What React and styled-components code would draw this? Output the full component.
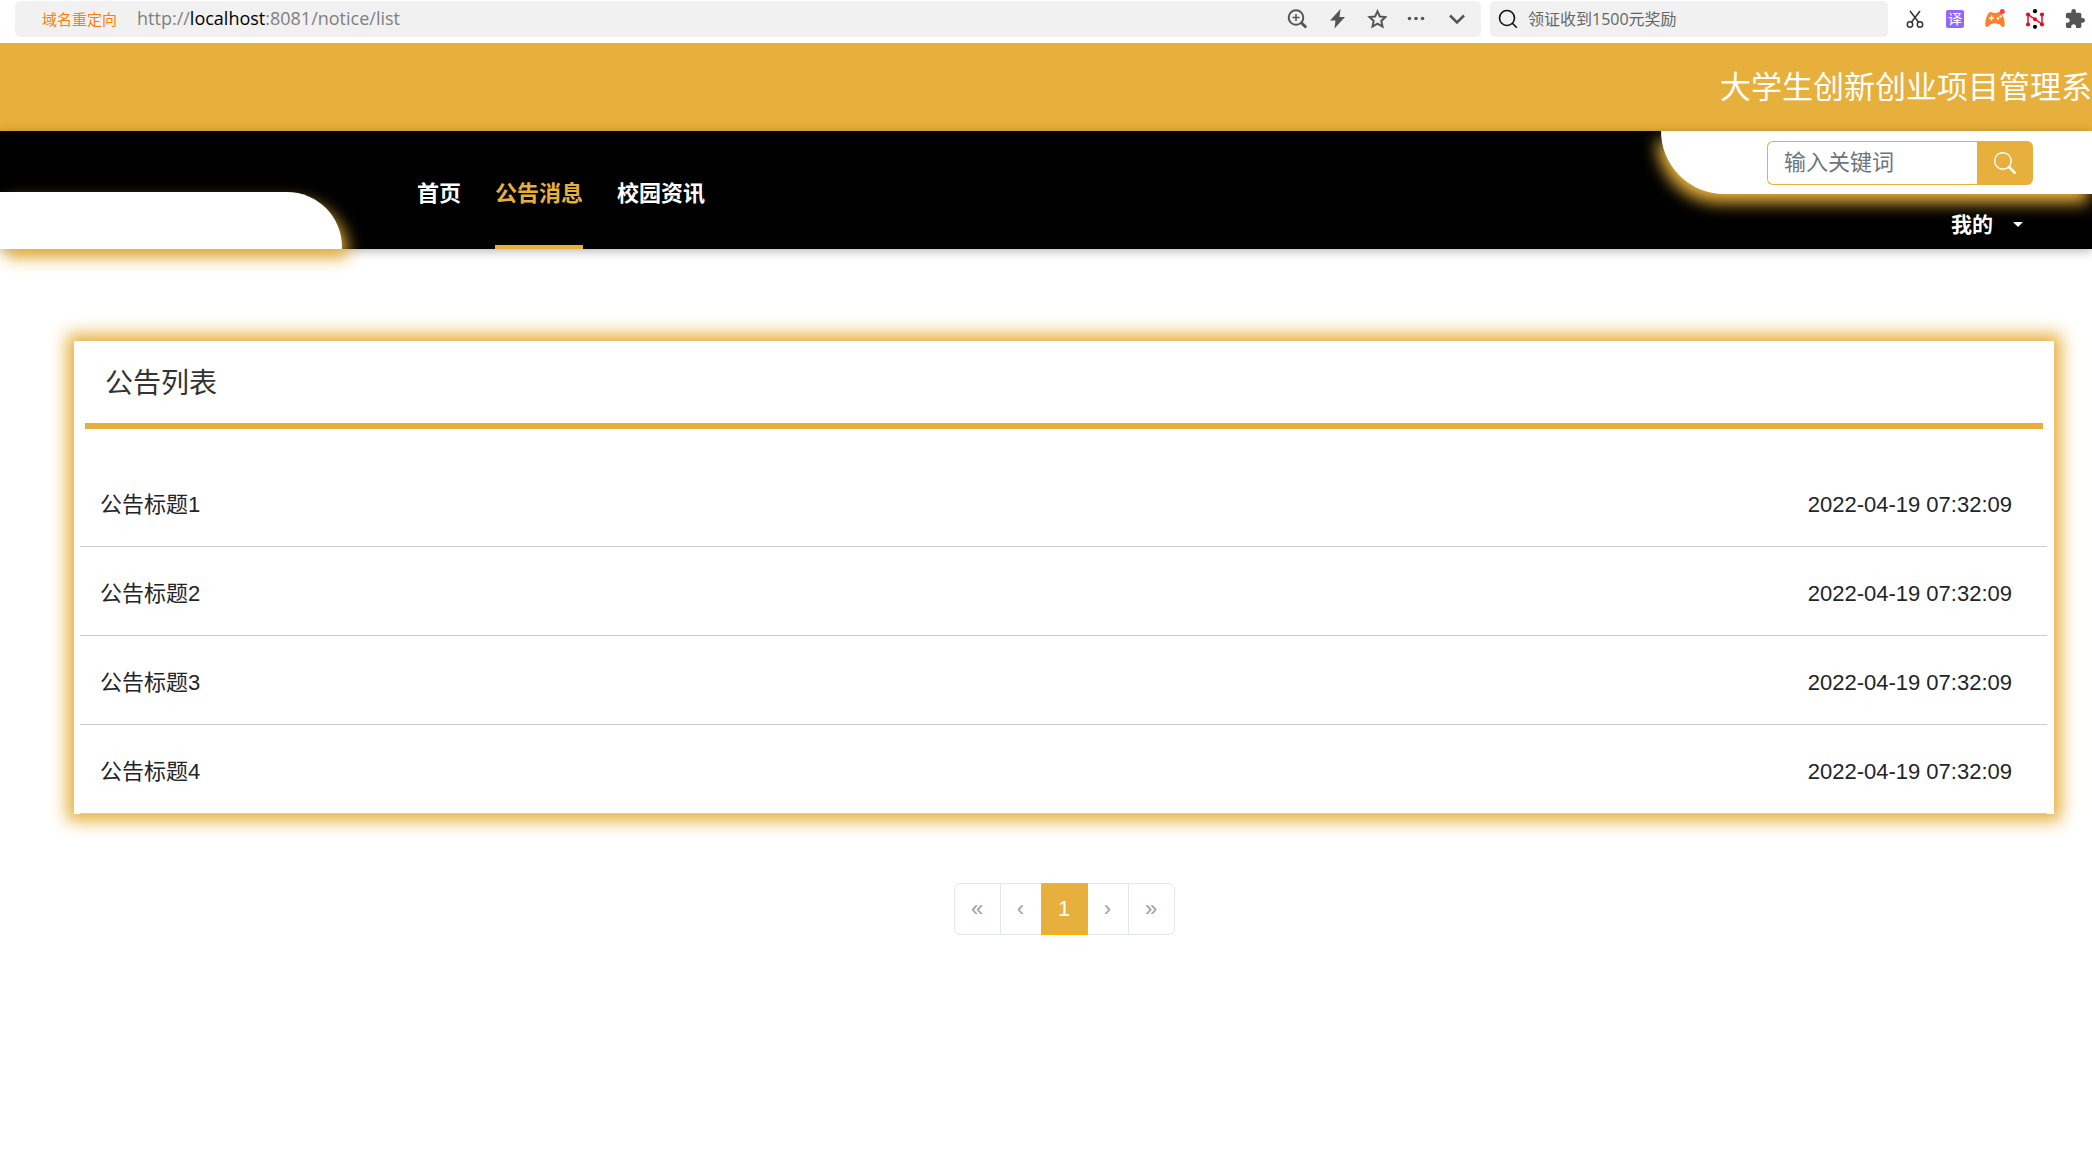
import React from "react";
import styled, { createGlobalStyle } from "styled-components";

const gold = "#e7b03c";

const GlobalStyle = createGlobalStyle`
  *, *::before, *::after { box-sizing: border-box; }
  body {
    margin: 0;
    background: #fff;
    color: #212529;
    font-family: "Liberation Sans", "Noto Sans CJK SC", sans-serif;
    font-size: 22px;
    line-height: 32px;
    overflow-x: hidden;
  }
  a { color: inherit; text-decoration: none; }
  ul { list-style: none; margin: 0; padding: 0; }
  button { font: inherit; border: 0; padding: 0; background: none; color: inherit; cursor: pointer; }
`;

/* Browser toolbar */
const Toolbar = styled.div`
  display: flex;
  align-items: flex-start;
  gap: 9px;
  height: 43px;
  padding: 1px 7px 0 15px;
  font-family: "Open Sans", "Noto Sans CJK SC", sans-serif;
`;

const Field = styled.div`
  display: flex;
  align-items: center;
  height: 36px;
  border-radius: 5px;
  background: #f1f1f1;
`;

const AddressField = styled(Field)`
  flex: 1;
  padding: 0 14px 0 27px;
`;

const Redirect = styled.span`
  margin-right: 20px;
  color: #ff8000;
  font-size: 15px;
`;

const Url = styled.span`
  flex: 1;
  padding-bottom: 2px;
  color: #808080;
  font-size: 18px;
  b { color: #000; font-weight: 400; }
`;

const IconRow = styled.div`
  display: flex;
  align-items: center;
  gap: 20px;
  height: 36px;
  color: #555;
`;

const ExtensionRow = styled(IconRow)`
  padding-left: 8px;
`;

const IconButton = styled.button`
  display: flex;
  width: 20px;
  height: 20px;
  svg { width: 20px; height: 20px; }
`;

const SearchField = styled(Field)`
  width: 398px;
  gap: 10px;
  padding: 0 8px;
  svg { width: 20px; height: 20px; flex: none; }
`;

const BrowserInput = styled.input`
  flex: 1;
  min-width: 0;
  padding: 0;
  border: 0;
  outline: 0;
  background: none;
  font-family: inherit;
  font-size: 16px;
  &::placeholder { color: #666; opacity: 1; }
`;

/* Site header */
const Banner = styled.div`
  display: flex;
  justify-content: flex-end;
  align-items: center;
  height: 88px;
  padding-top: 2px;
  background: ${gold};
`;

const Title = styled.div`
  color: #fff;
  font-size: 31px;
  line-height: 48px;
  white-space: nowrap;
`;

const Header = styled.header`
  position: relative;
  display: flex;
  height: 118px;
  background: #000;
  box-shadow: 0 2px 10px rgba(0, 0, 0, 0.3);
`;

const LogoTab = styled.div`
  align-self: flex-end;
  width: 342px;
  height: 57px;
  border-radius: 0 55px 0 0;
  background: #fff;
  box-shadow: 6px 9px 16px ${gold};
`;

const Nav = styled.nav`
  display: flex;
  flex: 1;
  gap: 34px;
  padding-left: 75px;
  font-weight: 700;
`;

const NavLink = styled.a`
  display: flex;
  align-items: center;
  padding-top: 12px;
  border-bottom: 4px solid ${(p) => (p.$active ? gold : "transparent")};
  color: ${(p) => (p.$active ? gold : "#fff")};
`;

const HeaderSide = styled.div`
  display: flex;
  flex-direction: column;
  width: 431px;
`;

const SearchPanel = styled.form`
  display: flex;
  justify-content: flex-end;
  align-items: center;
  height: 63px;
  padding-right: 59px;
  border-radius: 0 0 0 63px;
  background: #fff;
  box-shadow: -4px 9px 16px ${gold};
  clip-path: inset(0 0 -40px -40px);
`;

const KeywordInput = styled.input`
  width: 210px;
  height: 44px;
  padding: 0 16px;
  border: 1px solid ${gold};
  border-right: 0;
  border-radius: 6px 0 0 6px;
  outline: 0;
  font: inherit;
  &::placeholder { color: #6c757d; opacity: 1; }
`;

const SearchButton = styled.button`
  display: flex;
  justify-content: center;
  align-items: center;
  width: 56px;
  height: 44px;
  border-radius: 0 6px 6px 0;
  background: ${gold};
  color: #fff;
`;

const UserMenu = styled.button`
  display: flex;
  align-items: center;
  align-self: flex-end;
  gap: 20px;
  height: 55px;
  padding: 6px 69px 0 0;
  color: #fff;
  font-size: 21px;
  font-weight: 700;
`;

const Caret = styled.span`
  border: 5px solid transparent;
  border-top-color: #fff;
  border-bottom: 0;
`;

/* Notice list */
const Main = styled.main`
  display: flex;
  flex-direction: column;
  align-items: center;
  gap: 69px;
  padding: 92px 38px 60px 74px;
`;

const Card = styled.section`
  width: 100%;
  padding: 0 7px 0 6px;
  background: #fff;
  box-shadow: 0 0 16px 7px ${gold};
`;

const CardTitle = styled.h1`
  margin: 0 4px 29px 5px;
  padding: 23px 20px 19px;
  border-bottom: 6px solid ${gold};
  color: #333;
  font-size: 28px;
  font-weight: 400;
  line-height: 40px;
`;

const NoticeItem = styled.li`
  border-bottom: 1px solid #ccc;
`;

const NoticeLink = styled.a`
  display: flex;
  justify-content: space-between;
  align-items: center;
  height: 88px;
  padding: 6px 35px 0 20px;
`;

const Pages = styled.ul`
  display: flex;
`;

const PageItem = styled.li`
  & + & { margin-left: -1px; }
  &:first-child button { border-radius: 6px 0 0 6px; }
  &:last-child button { border-radius: 0 6px 6px 0; }
`;

const PageButton = styled.button`
  width: ${(p) => (p.$narrow ? 42 : 47)}px;
  height: 52px;
  border: 1px solid ${(p) => (p.$active ? "#ffb300" : "#e4e7ea")};
  background: ${(p) => (p.$active ? gold : "#fff")};
  color: ${(p) => (p.$active ? "#fff" : "#999fa5")};
  position: relative;
  z-index: ${(p) => (p.$active ? 1 : 0)};
`;

const ZoomIcon = () => (
  <svg viewBox="0 0 20 20" fill="none" stroke="currentColor" strokeWidth="2">
    <circle cx="9" cy="8.500" r="7.300" />
    <path d="M5.500 8.500h7M9 5v7" strokeWidth="1.500" />
    <path d="M14 13.500l5.200 5" strokeWidth="3" />
  </svg>
);
const BoltIcon = () => (
  <svg viewBox="0 0 20 20" fill="currentColor">
    <path d="M13.500 0 3 11.500H8.500L7.500 19.500 18 8H12.500z" />
  </svg>
);
const StarIcon = () => (
  <svg viewBox="0 0 20 20" fill="none" stroke="currentColor" strokeWidth="2">
    <path d="M10.500 2.300l2.400 5.200 5.600.6-4.200 3.800 1.200 5.600-5-2.900-5 2.900 1.200-5.600L2.500 8.100l5.600-.6z" />
  </svg>
);
const DotsIcon = () => (
  <svg viewBox="0 0 20 20" fill="currentColor">
    <circle cx="2.500" cy="9.500" r="1.800" />
    <circle cx="9" cy="9.500" r="1.800" />
    <circle cx="15.500" cy="9.500" r="1.800" />
  </svg>
);
const ChevronIcon = () => (
  <svg viewBox="0 0 20 20" fill="none" stroke="currentColor" strokeWidth="2.500">
    <path d="M3 6.500l7 7 7-7" />
  </svg>
);
const LensIcon = () => (
  <svg viewBox="0 0 20 20" fill="none" stroke="#111" strokeWidth="1.600">
    <circle cx="9" cy="9" r="7.500" />
    <path d="M14.300 14.300l4.500 4.500" />
  </svg>
);
const ScissorsIcon = () => (
  <svg viewBox="0 0 20 20" fill="none" stroke="#333" strokeWidth="1.500">
    <circle cx="5" cy="15.500" r="2.700" />
    <circle cx="15" cy="15.500" r="2.700" />
    <path d="M5 2l8.600 11.200M15 2L6.400 13.200" />
  </svg>
);
const GameIcon = () => (
  <svg viewBox="0 0 20 20">
    <path d="M4.500 3.200C6 2.300 7.500 4 10 4s4-1.700 5.500-.8C18 5 20.300 13 19.600 16.500c-.5 2-2.600 1.800-4.100-.2-1.700-2.300-9.300-2.300-11 0-1.500 2-3.600 2.200-4.100.2C-.3 13 2 5 4.500 3.200z" fill="#ff7f2a" />
    <path d="M4 9h5M6.500 6.500v5" stroke="#fff" strokeWidth="1.500" />
    <circle cx="13" cy="9.500" r="1.200" fill="#fff" />
    <circle cx="15.500" cy="7.500" r="1.200" fill="#fff" />
    <circle cx="17.300" cy="2.500" r="2.500" fill="#ff4040" />
  </svg>
);
const NodesIcon = () => (
  <svg viewBox="0 0 20 20">
    <path d="M3 16V5.500L17 15V5" fill="none" stroke="#e60f22" strokeWidth="1.500" />
    <g fill="#e60f22">
      <circle cx="3" cy="5.500" r="2.100" />
      <circle cx="3" cy="15.500" r="2.100" />
      <circle cx="10" cy="10.200" r="2" />
      <circle cx="17" cy="5.500" r="2.100" />
      <circle cx="17" cy="15.500" r="2.100" />
    </g>
    <circle cx="10" cy="2.200" r="2.100" />
    <circle cx="10" cy="17.800" r="2.100" />
  </svg>
);
const PuzzleIcon = () => (
  <svg viewBox="1 1 22 22" fill="currentColor">
    <path d="M20.500 11H19V7c0-1.100-.9-2-2-2h-4V3.500a2.500 2.500 0 0 0-5 0V5H4c-1.100 0-2 .9-2 2v3.800h1.500c1.500 0 2.700 1.200 2.700 2.700S5 16.200 3.500 16.200H2V20c0 1.100.9 2 2 2h3.800v-1.500c0-1.500 1.200-2.700 2.700-2.700s2.700 1.200 2.700 2.700V22H17c1.100 0 2-.9 2-2v-4h1.500a2.500 2.500 0 0 0 0-5z" />
  </svg>
);
const SearchIcon = () => (
  <svg width="22" height="22" viewBox="0 0 16 16" fill="currentColor">
    <path d="M11.742 10.344a6.500 6.500 0 1 0-1.397 1.398h-.001c.03.04.062.078.098.115l3.850 3.850a1 1 0 0 0 1.415-1.414l-3.850-3.850a1.007 1.007 0 0 0-.115-.1zM12 6.500a5.500 5.500 0 1 1-11 0 5.500 5.500 0 0 1 11 0z" />
  </svg>
);

const Translate = styled(IconButton)`
  justify-content: center;
  align-items: center;
  border-radius: 2px;
  background: #9466ff;
  color: #fff;
  width: 18px;
  height: 18px;
  margin: 0 1px;
  font-size: 14px;
  line-height: 18px;
`;

const tools = [
  ["放大", ZoomIcon],
  ["加速", BoltIcon],
  ["收藏", StarIcon],
  ["更多", DotsIcon],
  ["展开", ChevronIcon],
];

const links = ["首页", "公告消息", "校园资讯"];

const notices = [1, 2, 3, 4].map((n) => ({
  title: `公告标题${n}`,
  time: "2022-04-19 07:32:09",
}));

const pages = ["«", "‹", "1", "›", "»"];

export default function App() {
  return (
    <>
      <GlobalStyle />
      <Toolbar>
        <AddressField>
          <Redirect>域名重定向</Redirect>
          <Url>
            http://<b>localhost</b>:8081/notice/list
          </Url>
          <IconRow>
            {tools.map(([label, Icon]) => (
              <IconButton key={label} type="button" aria-label={label}>
                <Icon />
              </IconButton>
            ))}
          </IconRow>
        </AddressField>
        <SearchField>
          <LensIcon />
          <BrowserInput aria-label="搜索" placeholder="领证收到1500元奖励" />
        </SearchField>
        <ExtensionRow>
          <IconButton type="button" aria-label="截图"><ScissorsIcon /></IconButton>
          <Translate type="button">译</Translate>
          <IconButton type="button" aria-label="游戏"><GameIcon /></IconButton>
          <IconButton type="button" aria-label="节点"><NodesIcon /></IconButton>
          <IconButton type="button" aria-label="扩展"><PuzzleIcon /></IconButton>
        </ExtensionRow>
      </Toolbar>

      <Banner>
        <Title>大学生创新创业项目管理系</Title>
      </Banner>

      <Header>
        <LogoTab />
        <Nav>
          {links.map((text) => (
            <NavLink key={text} href="#" $active={text === "公告消息"}>
              {text}
            </NavLink>
          ))}
        </Nav>
        <HeaderSide>
          <SearchPanel>
            <KeywordInput aria-label="关键词" placeholder="输入关键词" />
            <SearchButton type="button" aria-label="搜索">
              <SearchIcon />
            </SearchButton>
          </SearchPanel>
          <UserMenu type="button">
            我的
            <Caret />
          </UserMenu>
        </HeaderSide>
      </Header>

      <Main>
        <Card>
          <CardTitle>公告列表</CardTitle>
          <ul>
            {notices.map((n) => (
              <NoticeItem key={n.title}>
                <NoticeLink href="#">
                  <span>{n.title}</span>
                  <time>{n.time}</time>
                </NoticeLink>
              </NoticeItem>
            ))}
          </ul>
        </Card>
        <nav aria-label="分页">
          <Pages>
            {pages.map((p) => (
              <PageItem key={p}>
                <PageButton type="button" $active={p === "1"} $narrow={p === "‹" || p === "›"}>
                  {p}
                </PageButton>
              </PageItem>
            ))}
          </Pages>
        </nav>
      </Main>
    </>
  );
}
